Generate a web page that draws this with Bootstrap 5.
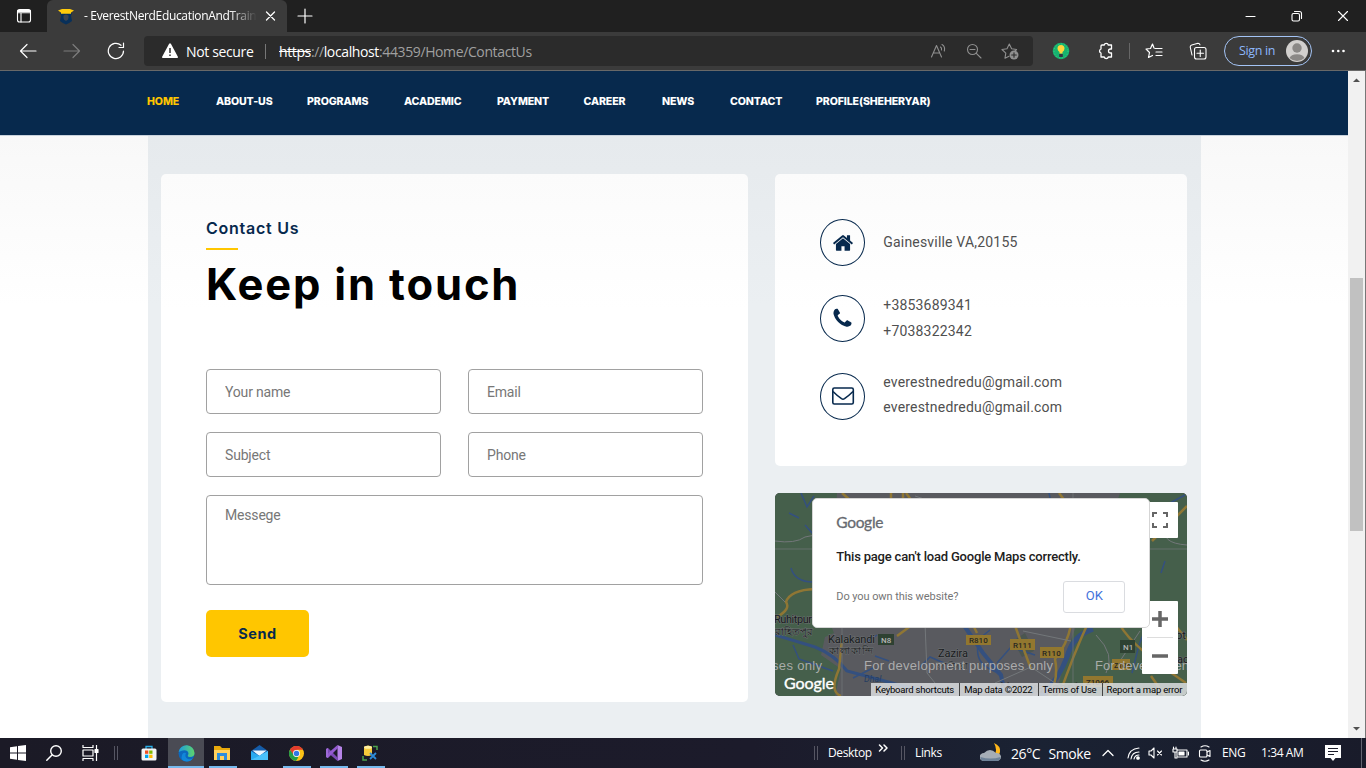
<!DOCTYPE html>
<html lang="en">
<head>
<meta charset="utf-8">
<meta name="viewport" content="width=device-width, initial-scale=1">
<title>EverestNerdEducationAndTraining</title>
<link href="https://cdn.jsdelivr.net/npm/bootstrap@5.3.0/dist/css/bootstrap.min.css" rel="stylesheet">
<style>
:root{--navy:#07294d;--gold:#ffc600}
html,body{height:100%;overflow:hidden}
body{font-family:Roboto,sans-serif;color:#505050;background:#fff}
svg{display:block;flex:none}
.desk{width:1366px;height:768px}
.ui{font-family:"Open Sans","Noto Sans",sans-serif;color:#fff;white-space:nowrap}
.ln{fill:none;stroke:currentColor;stroke-width:1.1;stroke-linecap:round;stroke-linejoin:round}
.slot{display:flex;align-items:center;justify-content:center;flex:none;width:44px}
/* browser frame */
.tabstrip{height:32px;background:#202020}
.tabicon{width:47px}
.tab-active{width:240px;background:#3b3b3b;border-radius:6px 6px 0 0;padding-left:11px}
.tabtitle{width:173px;margin-left:10px;font-size:12px;letter-spacing:-.34px;overflow:hidden;-webkit-mask-image:linear-gradient(90deg,#000 84%,transparent);mask-image:linear-gradient(90deg,#000 84%,transparent)}
.toolrow{height:39px;background:#3b3b3b;border-bottom:1px solid #686868;padding-left:6px}
.address{width:889px;height:30px;margin-left:6px;background:#2b2b2b;border-radius:4px;padding:0 5px 0 18px;font-size:14px}
.address .slot{width:36px;color:#8f8f8f}
.addr-sep{width:1px;height:15px;background:#777;margin:0 13px 0 11px}
.dimtxt{color:#a0a0a0}
.secure{width:68px;letter-spacing:-.36px;margin-left:8px}
.url{letter-spacing:-.38px}
.signin{width:88px;height:30px;border:1.5px solid #a4c4f5;border-radius:15px;color:#8db8fb;font-size:12.5px;letter-spacing:-.35px;padding:0 3px 0 14px;margin-left:4px}
/* web page */
.viewport{height:667px}
.site{width:1348px;background:#fff}
.site-nav{height:65px;background:var(--navy);border-bottom:1px solid #c9d2dc;padding-left:147px}
.navgrid{display:grid;grid-template-columns:69px 91px 97px 93px 86.5px 78.5px 68px 86px auto;padding-top:22px;font:800 10.6px/17px Inter,sans-serif;letter-spacing:-.12px;white-space:nowrap}
.navgrid a.nav-link{color:#fff;padding:0}
.navgrid a.active{color:var(--gold)}
.fade-top{background:linear-gradient(#f8f8f8,#fff 170px)}
.contact{width:1053px;margin-left:148px;padding-top:38px;background:linear-gradient(#e6eaed,#ebeff2 170px)}
.contact>.row{--bs-gutter-x:26px;margin:0}
.panel{background:linear-gradient(#fbfbfb,#fff 135px);border-radius:5px}
.panel-form{width:587px;height:528px;padding:45px}
.panel-info{width:412px;height:292px;padding:45px}
.eyebrow{font:600 16px/19px Inter,sans-serif;color:var(--navy);width:95px;white-space:nowrap;letter-spacing:.75px}
.rule{width:32px;height:2px;background:var(--gold);margin-top:10px}
.title{font:700 43.5px/52px Inter,sans-serif;color:#000;margin:8px 0 0;white-space:nowrap;letter-spacing:1.85px}
.fields{display:grid;grid-template-columns:235px 235px;gap:18px 27px;margin-top:59px}
.fields .form-control{height:45px;border:1px solid #a1a1a1;border-radius:4px;padding:0 18px;font-size:14px;letter-spacing:-.18px;color:#777;background:#fff}
.fields .form-control::placeholder{color:#777}
.fields textarea.form-control{height:90px;grid-column:1/3;resize:none;padding-top:9px}
.btn-send{width:103px;height:47px;background:var(--gold);border-radius:5px;margin-top:25px;color:var(--navy);font:700 14.5px Inter,sans-serif;letter-spacing:.6px;border:0}
.ring{width:45px;height:47px;border:1px solid var(--navy);border-radius:50%;color:var(--navy)}
.info-row{margin-bottom:29px;font-size:14px;line-height:26px;letter-spacing:.19px;gap:18px}
.info-text{position:relative;top:-1px}
.info-row.last-row{line-height:25px}
.mapbox{width:412px;height:203px;margin-top:27px;border-radius:5px;overflow:hidden;background:#55565a}
.map-dialog{position:absolute;left:37px;top:5px;width:338px;height:130px;background:#fff;border-radius:5px;border:1px solid #d5d5d5;padding:14px 25px 14px 23px}
.glogo{font:15.5px/18px Lato,sans-serif;color:#666a70;letter-spacing:-.3px;-webkit-text-stroke:.3px #666a70}
.msg{font-size:13px;line-height:18px;color:#212121;font-weight:500;margin-top:17px;white-space:nowrap;letter-spacing:-.19px}
.own{font-size:11px;color:#757575;letter-spacing:-.07px}
.own-row{margin-top:15px}
.btn-ok{width:62px;height:32px;border:1px solid #dadce0;border-radius:3px;color:#4272db;font-size:13px;padding:0 0 3px;background:#fff;margin-right:-1px}
.map-ctl{position:absolute;background:#fff;left:367px;width:36px;border-radius:1px}
.attrib{position:absolute;right:0;bottom:0;height:13px;width:316px;background:rgba(222,224,226,.84);font-size:9.5px;line-height:13px;color:#000;white-space:nowrap;padding:0 5px 0 4px;letter-spacing:-.2px}
.attrib span+span{border-left:1px solid #444;padding-left:4px}
.scroll{width:18px;background:#f1f1f1;border-right:1px solid #777;padding:0 2px}
.thumb{height:253px;margin-top:189px;background:#c1c1c1;width:13px}
/* taskbar */
.taskbar{height:30px;background:linear-gradient(90deg,#1b1a26,#1c1b2b 55%,#1a2233 76%,#191b2a);font-size:12px}
.taskbar .slot{width:37px;height:30px}
.run-bar{box-shadow:inset 0 -2px #76b9ed}
.taskbar .slot.w28{width:28px;margin:0 4.5px}
.grip{width:4px;height:14px;border:solid #565663;border-width:0 1px}
</style>
</head>
<body>
<div class="desk d-flex flex-column">
 <header class="ui">
  <div class="tabstrip d-flex align-items-stretch">
   <div class="tabicon slot"><svg class="ln" width="16" height="16" viewBox="0 0 16 16"><rect x="1.500" y="1.500" width="13" height="12.500" rx="2"/><path d="M1.500 4.700h13M5 4.700V14"/><path d="M2 3h12" stroke-width="2"/></svg></div>
   <div class="tab-active d-flex align-items-center">
    <svg width="16" height="17" viewBox="0 0 16 17"><path d="M2 5h12l-1 3 1 5q-3 2.500-6 3.500Q5 15.500 2 13l1-5z" fill="#08305a"/><path d="M5.500 7.500L8 6.500l2.500 1V10q0 2-2.500 3-2.500-1-2.500-3z" fill="#3b4450"/><path d="M0 2.500L4 1h8l4 1.500-3 2v1.200H3V4.500z" fill="#ffcb0b"/></svg>
    <div class="tabtitle">- EverestNerdEducationAndTraining</div>
    <svg class="ln" style="margin-left:3px" width="20" height="12" viewBox="0 0 20 12"><path d="M6.500 2l8 8M14.500 2l-8 8" stroke-width="1.300"/></svg>
   </div>
   <div class="slot" style="width:36px"><svg class="ln" width="16" height="16" viewBox="0 0 16 16"><path d="M8 1v14M1 8h14" stroke-width="1.200"/></svg></div>
   <div class="d-flex ms-auto me-0">
    <div class="slot" style="width:46px"><svg class="ln" width="12" height="12"><path d="M1 6.500h9"/></svg></div>
    <div class="slot" style="width:46px"><svg class="ln" width="12" height="12"><rect x="1" y="3.500" width="7.500" height="7.500" rx="1.500"/><path d="M3.500 1.500h5q2 0 2 2v5"/></svg></div>
    <div class="slot" style="width:46px"><svg class="ln" width="12" height="12"><path d="M1.500 1.500l9 9M10.500 1.500l-9 9"/></svg></div>
   </div>
  </div>
  <div class="toolrow d-flex align-items-center">
   <div class="slot"><svg class="ln" width="18" height="16"><path d="M17 8H1.500M8 1.500L1.500 8 8 14.500" stroke-width="1.200"/></svg></div>
   <div class="slot" style="color:#7c7c7c"><svg class="ln" width="18" height="16"><path d="M1 8h15.500M10 1.500L16.500 8 10 14.500" stroke-width="1.200"/></svg></div>
   <div class="slot"><svg class="ln" width="18" height="18"><path d="M16.500 9a7.600 7.600 0 1 1-2.500-5.700M16.500 1v4.500H12" stroke-width="1.200"/></svg></div>
   <div class="address d-flex align-items-center">
    <svg width="16" height="16" viewBox="0 0 16 16"><path d="M7 1q1-1.300 2 0l7 13q.3 1-1 1H1q-1.300 0-1-1z" fill="#fff"/><path d="M8 5v5M8 11.500v1.600" stroke="#2b2b2b" stroke-width="1.500"/></svg>
    <span class="secure">Not secure</span><span class="addr-sep"></span>
    <span class="url"><s>https</s><span class="dimtxt">://</span>localhost<span class="dimtxt">:44359/Home/ContactUs</span></span>
    <div class="d-flex ms-auto">
     <div class="slot"><svg class="ln" width="17" height="16"><path d="M1.500 14L6.500 2.500 11.500 14M3.200 10h6.600M10.500 4q1.500 1 1 3M12 1.500q3.500 2 2.300 6.500"/></svg></div>
     <div class="slot"><svg class="ln" width="16" height="16"><circle cx="6.500" cy="6.500" r="5"/><path d="M10.300 10.300L15 15M4 6.500h5"/></svg></div>
     <div class="slot"><svg class="ln" width="18" height="18"><path d="M8 14.200l-4 2 .8-5L1 7.500l5-.8L8.300 2l2.300 4.700 5 .8-2 2"/><circle cx="13" cy="13" r="4.500" fill="currentColor" stroke="none"/><path d="M13 10.700v4.600M10.700 13h4.600" stroke="#2b2b2b"/></svg></div>
    </div>
   </div>
   <div class="slot ms-2 me-0" style="width:40px"><svg width="18" height="18"><circle cx="9" cy="9" r="8.300" fill="#17b26f"/><circle cx="9" cy="9" r="7" fill="none" stroke="#3bd08b" stroke-dasharray="1 2"/><path d="M5.500 6.500a3.500 3.500 0 0 1 7 0q0 2-2 3.500v1.500h-3V10q-2-1.500-2-3.500" fill="#ffd43b"/><path d="M7.200 12h3.600v3H7.200z" fill="#334"/></svg></div>
   <div class="slot" style="width:48px"><svg class="ln" width="17" height="18"><path d="M5 3h2.200a2.100 2.100 0 0 1 4.100 0H14.500v4h-1a2 2 0 0 0 0 4h1v4h-3.200a2.100 2.100 0 0 1-4.100 0H4v-4a2.100 2.100 0 0 1 0-4V4q0-1 1-1z" stroke-width="1.300"/></svg></div>
   <span style="width:1px;height:16px;background:#666"></span>
   <div class="slot" style="width:42px;margin-left:3px"><svg class="ln" width="18" height="18"><path d="M9 6L7.500 2 5.500 6.500 1 7l3.500 3.500-1 5 4-2M10 6.500h7M11 10h6M11 13.500h6" stroke-width="1.200"/></svg></div>
   <div class="slot" style="margin-left:1px"><svg class="ln" width="18" height="18"><path d="M3 13L1.200 5q0-1.500 1.500-2L9 1.200q1.500 0 2 1.600"/><rect x="5.500" y="5.500" width="11.500" height="11.500" rx="2"/><path d="M11.250 8v6.500M8 11.250h6.500"/></svg></div>
   <div class="signin d-flex align-items-center justify-content-between"><span>Sign in</span><svg width="22" height="22"><circle cx="11" cy="11" r="11" fill="#d2d0ce"/><circle cx="11" cy="8" r="4.700" fill="#8a8886"/><path d="M3.500 18a7.700 5 0 0 1 15 0 11 11 0 0 1-15 0" fill="#8a8886"/></svg></div>
   <div class="slot ms-1"><svg width="16" height="4" fill="#fff"><circle cx="3" cy="2" r="1.300"/><circle cx="8.300" cy="2" r="1.300"/><circle cx="13.500" cy="2" r="1.300"/></svg></div>
  </div>
 </header>

 <div class="viewport d-flex">
  <div class="site">
   <nav class="site-nav"><div class="navgrid"><a class="nav-link active" href="#">HOME</a><a class="nav-link" href="#">ABOUT-US</a><a class="nav-link" href="#">PROGRAMS</a><a class="nav-link" href="#">ACADEMIC</a><a class="nav-link" href="#">PAYMENT</a><a class="nav-link" href="#">CAREER</a><a class="nav-link" href="#">NEWS</a><a class="nav-link" href="#">CONTACT</a><a class="nav-link" href="#">PROFILE(SHEHERYAR)</a></div></nav>
   <div class="fade-top">
    <main class="contact" style="height:602px">
     <div class="row">
      <div class="col-7">
       <section class="panel panel-form">
        <div class="eyebrow">Contact Us</div><div class="rule"></div>
        <h2 class="title">Keep in touch</h2>
        <form class="fields">
         <input class="form-control" placeholder="Your name"><input class="form-control" placeholder="Email">
         <input class="form-control" placeholder="Subject"><input class="form-control" placeholder="Phone">
         <textarea class="form-control" placeholder="Messege"></textarea>
        </form>
        <button class="btn btn-send">Send</button>
       </section>
      </div>
      <div class="col-5">
       <section class="panel panel-info">
        <div class="info-row d-flex align-items-center"><div class="ring slot"><svg width="22" height="22" viewBox="0 0 1792 1792" fill="currentColor"><path d="M1472 992v480q0 26-19 45t-45 19h-384v-384h-256v384h-384q-26 0-45-19t-19-45v-480q0-1 .5-3t.5-3l575-474 575 474q1 2 1 6zm223-69l-62 74q-8 9-21 11h-3q-13 0-21-7l-692-577-692 577q-12 8-24 7-13-2-21-11l-62-74q-8-10-7-23.500t11-21.500l719-599q32-26 76-26t76 26l244 204v-195q0-14 9-23t23-9h192q14 0 23 9t9 23v408l219 182q10 8 11 21.500t-7 23.500z"/></svg></div><div class="info-text">Gainesville VA,20155</div></div>
        <div class="info-row d-flex align-items-center"><div class="ring slot"><svg width="23" height="23" viewBox="0 0 1792 1792" fill="currentColor"><path d="M1600 1240q0 27-10 70.500t-21 68.500q-21 50-122 106-94 51-186 51-27 0-52.500-3.500t-57.500-12.500-47.500-14.500-55.500-20.500-49-18q-98-35-175-83-128-79-264.500-215.500t-215.500-264.500q-48-77-83-175-3-9-18-49t-20.500-55.500-14.500-47.500-12.500-57.500-3.500-52.500q0-92 51-186 56-101 106-122 25-11 68.500-21t70.500-10q14 0 21 3 18 6 53 76 11 19 30 54t35 63.500 31 53.500q3 4 17.500 25t21.500 35.500 7 28.500q0 20-28.500 50t-62 55-62 53-28.500 46q0 9 5 22.500t8.500 20.500 14 24 11.500 19q76 137 174 235t235 174q2 1 19 11.500t24 14 20.500 8.500 22.500 5q18 0 46-28.500t53-62 55-62 50-28.500q14 0 28.500 7t35.500 21.500 25 17.500q25 15 53.500 31t63.500 35 54 30q70 35 76 53 3 7 3 21z"/></svg></div><div class="info-text" style="margin:-3px 0">+3853689341<br>+7038322342</div></div>
        <div class="info-row last-row d-flex align-items-center"><div class="ring slot"><svg width="24" height="20" viewBox="0 0 24 20" fill="none" stroke="currentColor" stroke-width="1.600" stroke-linejoin="round"><rect x="1.800" y="2" width="20.500" height="16" rx="1.500"/><path d="M2 5.500q4 4 8.500 7.200 1.500 1 3 0Q18 9.500 22 5.500"/></svg></div><div class="info-text">everestnedredu@gmail.com<br>everestnedredu@gmail.com</div></div>
       </section>
       <section class="mapbox position-relative">
        <svg width="412" height="203" viewBox="0 0 412 203" font-family="Roboto,'Noto Sans',sans-serif">
         <rect width="412" height="203" fill="#595a5f"/>
         <path d="M0 0h62l-8 128 5 12-9 4-4 18 20 14-6 27H0zM345 0h67v203H281l10-42 9-25z" fill="#455f4b"/>
         <path d="M238 148l12-8 9 18-12 6z" fill="#4b5650"/>
         <g fill="none" stroke="#34507f" stroke-width="1.500"><path d="M26 0l6 14 7-11M14 20l10 5M30 32l8 9M16 75q4 14 22 14"/><path d="M0 142q20 6 40 12 20 8 32 24l45 12q18 6 60 10" stroke-width="3"/><path d="M18 152l6 14 34 12M78 185l20-10M90 150l12-8M100 163l14 5M145 174l10-10 14 6M222 170l14-16 24 8M205 145l10-8"/><path d="M190 134l18 26 18 22 4 20" stroke-width="4"/><path d="M203 152q-3 18 14 25t10 26"/><path d="M318 136q-20 6-26 28-8 22-26 39" stroke-width="5"/><path d="M366 85l8-9M386 80l4-12M274 0l2 9M357 180l7-28 10-25M395 10l15-8"/></g>
         <g fill="none" stroke="#8f7634" stroke-width="2.500"><path d="M67 0l8 7M116 0v8M128 0v8M131 0l6 8M2 124q14-8 9-15 4-12 29-13M66 203q-12-4-2-27l3-30M122 143l15-11M197 130l5 10M239 130l17 46M296 132q-4 20-16 34 4 20-6 37M313 130q-14 30-29 73M284 0l6 8M345 132q12 22 66 58M390 203l-14-20M377 48l35-35M400 132l12 15"/></g>
         <g fill="none" stroke="#73777a"><path d="M0 48q20 3 30-4l10-2M0 99l10 10M140 3q15 6 28 3M321 142q20 20 10 38M365 138l-20 30M392 34q-8 16 20 18M150 130l2 50 8 10M248 138l48 10M220 190l36-16 30 20"/><path d="M67 135v68M298 0v203M0 56h40M370 56h42" opacity=".7"/></g>
         <g font-size="11" fill="#181a1c" stroke="#6c7072" stroke-width="1" paint-order="stroke"><text x="-1" y="130" textLength="38">Ruhitpur</text><text x="0" y="142" font-size="10" textLength="38">রাহিতপুর</text><text x="53" y="150" textLength="47">Kalakandi</text><text x="54" y="161" font-size="10" textLength="44">কালাকান্দি</text><text x="163" y="164" textLength="30">Zazira</text><text x="161" y="176" font-size="9" textLength="32">জাজিরা</text><text x="89" y="189" font-size="9" font-style="italic" fill="#263d61" stroke="none">Dhal</text><text x="225" y="200" font-size="14" fill="#35373a" stroke="none">Narayanganj</text><text x="401" y="146">ot</text><text x="402" y="170">ao</text></g>
         <g font-size="8" font-weight="500"><path fill="#2e4132" d="M103 141h16v11h-16zM345 147h15v13h-15z"/><path fill="#92772f" d="M191 142h25v10h-25zM235 146h25v11h-25zM265 154h24v11h-24zM308 183h30v11h-30zM337 166h18v11h-18z"/><g fill="#b5b6b5"><text x="106" y="150">N8</text><text x="348" y="157">N1</text></g><g fill="#282722"><text x="194" y="150">R810</text><text x="238" y="155">R111</text><text x="267" y="163">R110</text><text x="311" y="192">Z1066</text><text x="339" y="175" font-size="7">Z104</text></g></g>
         <g font-family="'Liberation Sans',sans-serif" font-size="13" fill="#bcbcbc" fill-opacity=".85"><text x="-3" y="177" textLength="50">ses only</text><text x="89" y="177" textLength="189">For development purposes only</text><text x="320" y="177">For development</text></g>
         <text x="9" y="196" font-family="Lato,sans-serif" font-size="16" textLength="50" fill="#fff" stroke="#fff" stroke-width=".35">Google</text>
        </svg>
        <div class="map-ctl d-flex justify-content-center align-items-center" style="top:9px;height:36px"><svg width="16" height="16" fill="none" stroke="#666" stroke-width="2"><path d="M1 5V1h4M11 1h4v4M15 11v4h-4M5 15H1v-4"/></svg></div>
        <div class="map-ctl d-flex flex-column align-items-center" style="top:108px;height:73px"><svg width="36" height="73" fill="none" stroke="#666" stroke-width="3.500"><path d="M10 18h16M18 10v16M10 55h16"/><path d="M5 36.500h26" stroke="#ddd" stroke-width="1"/></svg></div>
        <div class="attrib d-flex justify-content-between"><span>Keyboard shortcuts</span><span>Map data ©2022</span><span>Terms of Use</span><span>Report a map error</span></div>
        <div class="map-dialog d-flex flex-column"><div class="glogo">Google</div><div class="msg">This page can't load Google Maps correctly.</div><div class="own-row d-flex justify-content-between align-items-center"><span class="own">Do you own this website?</span><button class="btn btn-ok">OK</button></div></div>
       </section>
      </div>
     </div>
    </main>
   </div>
  </div>
  <div class="scroll d-flex flex-column align-items-center"><svg width="9" height="18"><path d="M1 11l3.500-3.500L8 11z" fill="#505050"/></svg><div class="thumb"></div><svg class="mt-auto" width="9" height="18"><path d="M1 7h7l-3.500 3.500z" fill="#505050"/></svg></div>
 </div>

 <footer class="taskbar ui d-flex align-items-center">
  <div class="slot" style="width:36px"><svg width="16" height="16" fill="#fff"><path d="M0 2.300l7-1v6.300H0zM8 1.100L16 0v7.600H8zM0 8.500h7v6.200l-7-1zM8 8.500h8V16l-8-1.100z"/></svg></div>
  <div class="slot" style="width:36px"><svg class="ln" width="16" height="16"><circle cx="10" cy="6" r="5.300" stroke-width="1.400"/><path d="M6 10L.8 15.200" stroke-width="1.500"/></svg></div>
  <div class="slot" style="width:36px"><svg class="ln" width="17" height="16" stroke-linecap="butt"><path d="M1 0v2.500h10V0M1 16v-2.500h10V16M1 5h10v6H1zM14.500 0v16" stroke-width="1.200"/><path d="M13 4.500h3v3h-3z" fill="#fff"/></svg></div>
  <span class="grip" style="margin:0 12px 0 6px"></span>
  <div class="slot" style="margin-right:1px"><svg width="16" height="16"><path d="M5 4V1.500h6V4" fill="none" stroke="#29aee8" stroke-width="1.300"/><rect x=".5" y="3.500" width="15" height="12" rx="1.500" fill="#f3f4f5"/><path fill="#f25022" d="M4 5.500h3.300v3.300H4z"/><path fill="#7fba00" d="M8.200 5.500h3.300v3.300H8.200z"/><path fill="#00a4ef" d="M4 9.700h3.300V13H4z"/><path fill="#ffb900" d="M8.200 9.700h3.300V13H8.200z"/></svg></div>
  <div class="slot run-bar" style="width:36px;background-color:#4a4b54"><svg width="17" height="17"><defs><linearGradient id="eg"><stop stop-color="#1a9ce0"/><stop offset="1" stop-color="#5fd46a"/></linearGradient></defs><circle cx="8.500" cy="8.500" r="8" fill="#0c68be"/><path d="M.6 7A8 8 0 0 1 16.500 8q0 4-4.500 4-3 0-2-2 1.200-2-.8-4Q6 4 .6 7" fill="url(#eg)"/><path d="M8 8q-2 4 2 6 3 1 5-1-2 3.500-6 3.500Q2 16 4 10q1-3 4-2" fill="#1187d9"/></svg></div>
  <div class="slot run-bar w28"><svg width="17" height="16"><path d="M0 1h6l2 2h8v12H0z" fill="#e8a90c"/><path d="M0 5h16v10H0z" fill="#ffd15c"/><path d="M3 15V8h10v7h-3v-4H6v4z" fill="#2b8ddd"/></svg></div>
  <div class="slot"><svg width="17" height="16"><path d="M0 6l8.500-6L17 6v9H0z" fill="#155ca8"/><path d="M1.500 5.500h14L8.500 11z" fill="#eaf6ff"/><path d="M0 6l8.500 5L17 6v9H0z" fill="#2aaaf0"/><path d="M0 15L17 6v9z" fill="#49c1fb"/></svg></div>
  <div class="slot run-bar w28"><svg width="15" height="15" viewBox="0 0 16 16"><circle cx="8" cy="8" r="8" fill="#fbc116"/><path d="M1 4a8 8 0 0 1 14 0H8v4L5 11z" fill="#e33b2e"/><path d="M1 4L6 11l4 1-2.500 4A8 8 0 0 1 1 4" fill="#249d48"/><circle cx="8" cy="8" r="3.700" fill="#fff"/><circle cx="8" cy="8" r="2.900" fill="#3178e6"/></svg></div>
  <div class="slot run-bar w28"><svg width="16" height="16"><path d="M11.500 0L16 2v12l-4.500 2z" fill="#b684e8"/><path d="M0 4l2-1 10 10-.5 3L0 6z" fill="#7c4bb7"/><path d="M0 12l2 1L12 3l-.5-3L0 10z" fill="#935bd0"/><path d="M0 4v8l2 1V3z" fill="#9e6bd7"/></svg></div>
  <div class="slot run-bar w28"><svg width="17" height="17"><path d="M2 2q4-3 8 0v8q-4 2-8 0z" fill="#f7ca3a"/><ellipse cx="6" cy="2.300" rx="4" ry="1.500" fill="#fff0a3"/><path d="M11 1.500h4V5M1 11v4h4" fill="none" stroke="#4ea34c" stroke-width="1.500"/><path d="M8 8l6 6M14 8l-6 6" stroke="#2d8bd8" stroke-width="1.800"/></svg></div>
  <div class="d-flex align-items-center ms-auto">
   <span class="grip"></span><span style="width:43px;margin-left:10px;letter-spacing:-.35px">Desktop</span>
   <svg class="ln" style="margin:-11px 12px 0 7px" width="11" height="8"><path d="M1.500 1l3 3-3 3M6 1l3 3-3 3" stroke-width="1.500"/></svg>
   <span class="grip"></span><span style="width:27px;margin-left:10px;letter-spacing:-.35px">Links</span>
   <svg style="margin-left:38px" width="22" height="20"><path d="M14 0q7 3 6 9-1 5-6 4 4-6 0-13" fill="#ffb71b"/><path d="M4 18a4.500 4 0 0 1 0-8q6-6 12 0a4.500 4 0 0 1 1 8z" fill="#a5adb6"/><path d="M4 18q-4 0-3.500-4 10 3 20 0 0 4-4 4z" fill="#6e8298"/></svg>
   <span style="font-size:14px;margin-left:9px;width:80px;letter-spacing:-.4px;word-spacing:5px">26°C Smoke</span>
   <svg class="ln" style="margin-left:11px" width="12" height="8"><path d="M1 6.500L6 1.500l5 5" stroke-width="1.300"/></svg>
   <svg class="ln" style="margin-left:13px" width="13" height="14"><path d="M1 12Q2 3 12 2M4 13q1-7 8-7M7 13q1-4 5-4"/><circle cx="11" cy="12" r="1.300" fill="#fff"/></svg>
   <svg class="ln" style="margin-left:8px" width="15" height="14"><path d="M1 5h2l3-3v10L3 9H1zM9.500 5l4 4M13.500 5l-4 4"/></svg>
   <svg class="ln" style="margin-left:9px" width="17" height="14"><path d="M5 4h10v7H5zM16.500 6v3M1.500 1v2M4 1v2M1 3h4v3H1zM3 6v6h2"/><path d="M7 6h5v3H7z" fill="#fff"/></svg>
   <svg class="ln" style="margin-left:9px" width="14" height="17"><rect x="1.500" y="5" width="7.500" height="7" rx="1"/><path d="M9 7l3-1.500v6L9 10M3 2q4-2.500 8 0M3 15q4 2.500 8 0"/></svg>
   <span style="margin-left:10px;width:24px;letter-spacing:-.35px">ENG</span>
   <span style="margin-left:15px;width:44px;letter-spacing:-.4px">1:34 AM</span>
   <svg style="margin-left:20px" width="16" height="17"><path d="M0 0h16v13H10.500L8 16l-2.500-3H0z" fill="#fff"/><path d="M3 3.500h10M3 6.500h10M3 9.500h6" stroke="#1b1c2a"/></svg>
   <span style="width:1px;height:30px;background:#626470;margin:0 4px 0 20px"></span>
  </div>
 </footer>
</div>
<script src="https://cdn.jsdelivr.net/npm/bootstrap@5.3.0/dist/js/bootstrap.bundle.min.js"></script>
</body>
</html>
